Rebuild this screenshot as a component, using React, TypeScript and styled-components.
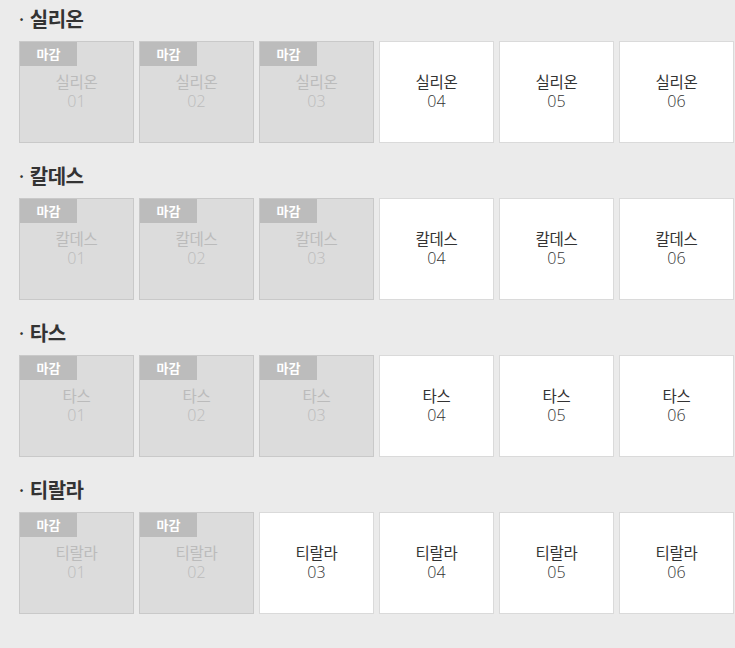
import React from "react";
import styled, { createGlobalStyle } from "styled-components";

const GlobalStyle = createGlobalStyle`
  html, body {
    margin: 0;
    padding: 0;
    background: #ebebeb;
    font-family: "Noto Sans CJK KR", "Noto Sans", sans-serif;
  }
`;

const StyledPage = styled.div`
  padding: 0 0 20px 19px;
  width: 716px;
`;

const StyledSection = styled.section`
  margin-bottom: 14px;
`;

const StyledHeading = styled.h2`
  display: flex;
  align-items: center;
  margin: 0;
  padding-top: 4px;
  margin-bottom: 7px;
  font-size: 20px;
  line-height: 30px;
  font-weight: 700;
  color: #333;
  letter-spacing: -0.5px;
`;

const StyledDot = styled.span`
  margin-left: -3px;
  margin-right: 3px;
  font-weight: 400;
`;

const StyledGrid = styled.div`
  display: grid;
  grid-template-columns: repeat(6, 115px);
  gap: 5px;
`;

const StyledCard = styled.div<{ $closed: boolean }>`
  position: relative;
  box-sizing: border-box;
  height: 102px;
  padding-top: 29px;
  text-align: center;
  font-size: 16px;
  line-height: 20px;
  background: ${({ $closed }) => ($closed ? "#dcdcdc" : "#fff")};
  border: 1px solid ${({ $closed }) => ($closed ? "#c9c9c9" : "#dadada")};
  color: ${({ $closed }) => ($closed ? "#bbbbbb" : "#333")};
`;

const StyledName = styled.div`
  letter-spacing: -0.3px;
  font-size: 15.5px;
  height: 20px;
`;

const StyledNumber = styled.div`
  font-family: "Open Sans", "Noto Sans", sans-serif;
  font-weight: 300;
  font-size: 16px;
  height: 20px;
`;

const StyledBadge = styled.span`
  position: absolute;
  top: 0;
  left: 0;
  width: 57px;
  height: 24px;
  background: #bcbcbc;
  color: #fff;
  font-size: 13px;
  font-weight: 700;
  line-height: 24px;
  text-align: center;
`;

type Server = {
  name: string;
  closed: number;
};

const servers: Server[] = [
  { name: "실리온", closed: 3 },
  { name: "칼데스", closed: 3 },
  { name: "타스", closed: 3 },
  { name: "티랄라", closed: 2 },
];

const App = () => {
  return (
    <>
      <GlobalStyle />
      <StyledPage>
        {servers.map((server) => (
          <StyledSection key={server.name}>
            <StyledHeading>
              <StyledDot>·</StyledDot>
              {server.name}
            </StyledHeading>
            <StyledGrid>
              {[1, 2, 3, 4, 5, 6].map((n) => {
                const closed = n <= server.closed;
                return (
                  <StyledCard key={n} $closed={closed}>
                    {closed && <StyledBadge>마감</StyledBadge>}
                    <StyledName>{server.name}</StyledName>
                    <StyledNumber>{String(n).padStart(2, "0")}</StyledNumber>
                  </StyledCard>
                );
              })}
            </StyledGrid>
          </StyledSection>
        ))}
      </StyledPage>
    </>
  );
};

export default App;
